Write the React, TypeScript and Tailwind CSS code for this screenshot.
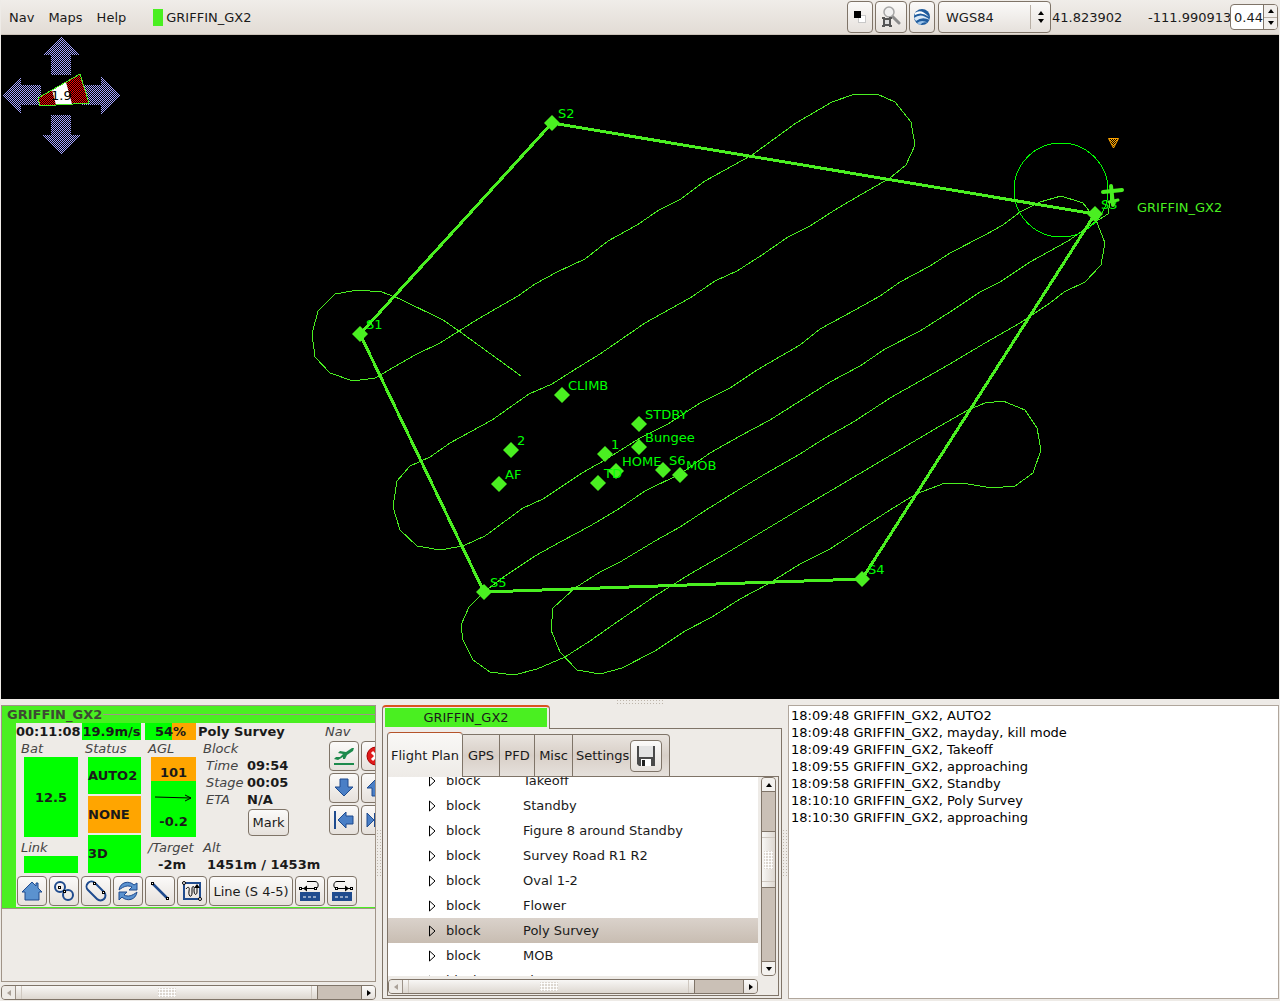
import type { ReactNode } from 'react';

const GREEN = '#4aef21';

interface Waypoint {
  name: string;
  x: number;
  y: number;
}

const waypoints: Waypoint[] = [
  { name: 'S1', x: 360, y: 334 },
  { name: 'S2', x: 552, y: 123 },
  { name: 'S3', x: 1095, y: 214 },
  { name: 'S4', x: 862, y: 579 },
  { name: 'S5', x: 484, y: 592 },
  { name: 'CLIMB', x: 562, y: 395 },
  { name: 'STDBY', x: 639, y: 424 },
  { name: 'Bungee', x: 639, y: 447 },
  { name: '1', x: 605, y: 454 },
  { name: '2', x: 511, y: 450 },
  { name: 'AF', x: 499, y: 484 },
  { name: 'HOME', x: 616, y: 471 },
  { name: 'TD', x: 598, y: 483 },
  { name: 'S6', x: 663, y: 470 },
  { name: 'MOB', x: 680, y: 475 },
];

const track = [
  '521,376 459,331 443,320 400,299 382,292 358,290 335,294 318,311 312,334 315,357 330,373 353,381 375,378',
  '415,355 440,343 478,319 518,296 535,284 557,272 585,259 608,241 637,225 659,210 681,199 705,181 752,155 796,123 832,102',
  '855,94 877,94 895,102 911,122 915,145 906,165 890,178',
  '862,194 838,208 810,226 788,237 762,255 737,271 715,281 690,298 645,323 600,354 574,370 552,384 529,394 492,420 450,443 430,457',
  '410,466 397,481 393,507 400,530 417,546 440,550 463,546',
  '485,536 523,508 543,499 582,473 605,460 640,438 668,424 700,403 730,388 757,370 800,345 820,329 855,310 880,296 900,282 930,266 950,253 985,235 1003,225 1020,212 1040,202',
  '1061,196 1083,203 1096,220 1105,243 1101,265 1085,282 1064,292',
  '1050,303 1020,323 985,343 955,361 920,381 890,398 855,421 825,438 800,454 765,474 740,489 706,510 680,527 655,541 620,562 600,572 575,588',
  '553,608 551,630 560,652 577,670 600,674 622,668',
  '655,651 685,631 712,617 740,599 768,584 800,564 830,549 862,528 890,510 916,494',
  '945,483 968,484 992,488 1015,486 1033,473 1041,450 1037,428 1025,410 1003,401 985,403 968,410',
  '940,426 800,509 725,554 690,574 655,596 617,622 590,641 565,657',
  '537,669 514,675 490,672 473,660 463,640 461,625 469,607 484,592',
  '505,576 535,556 562,541 590,526 617,510 645,491 680,474 710,453 740,436 770,420 800,401 830,382 860,366 885,349 920,331 950,312 980,292 1000,282 1030,262 1068,241 1095,222 1108,214 1111,195',
].join(' ');

const blocks = [
  'Takeoff',
  'Standby',
  'Figure 8 around Standby',
  'Survey Road R1 R2',
  'Oval 1-2',
  'Flower',
  'Poly Survey',
  'MOB',
  'Line 1-2',
];

const messages = [
  '18:09:48 GRIFFIN_GX2, AUTO2',
  '18:09:48 GRIFFIN_GX2, mayday, kill mode',
  '18:09:49 GRIFFIN_GX2, Takeoff',
  '18:09:55 GRIFFIN_GX2, approaching',
  '18:09:58 GRIFFIN_GX2, Standby',
  '18:10:10 GRIFFIN_GX2, Poly Survey',
  '18:10:30 GRIFFIN_GX2, approaching',
];

function ToolButton({ label, className = 'w-[30px] h-[30px]', children }: { label: string; className?: string; children: ReactNode }) {
  return (
    <button
      type="button"
      aria-label={label}
      className={`shrink-0 flex items-center justify-center rounded border border-[#7f7468] bg-linear-to-b from-[#fbfaf9] to-[#e6e1dc] ${className}`}
    >
      {children}
    </button>
  );
}

function MapView() {
  return (
    <svg viewBox="1 35 1278 664" className="block w-full h-auto bg-black" fontFamily="DejaVu Sans, sans-serif" fontSize="13">
      <defs>
        <pattern id="dotsBlue" width="2" height="2" patternUnits="userSpaceOnUse">
          <rect width="1" height="1" fill="#a3a3ff" />
          <rect x="1" y="1" width="1" height="1" fill="#a3a3ff" />
        </pattern>
        <pattern id="dotsRed" width="2" height="2" patternUnits="userSpaceOnUse">
          <rect width="1" height="1" fill="#ff0000" />
          <rect x="1" y="1" width="1" height="1" fill="#ff0000" />
        </pattern>
        <pattern id="dotsOrange" width="2" height="2" patternUnits="userSpaceOnUse">
          <rect width="1" height="1" fill="#ffa500" />
          <rect x="1" y="1" width="1" height="1" fill="#ffa500" />
        </pattern>
      </defs>

      {/* Pan arrows */}
      <g fill="url(#dotsBlue)" shapeRendering="crispEdges">
        <path d="M61 36 L80 55 H71 V75 H51 V55 H43 Z" />
        <path d="M61 155 L81 135 H71 V115 H51 V135 H42 Z" />
        <path d="M2 95 L21 77 V85 H41 V105 H21 V114 Z" />
        <path d="M121 95 L101 76 V85 H81 V105 H101 V115 Z" />
      </g>

      {/* Wind indicator */}
      <path d="M38 98 L80 74 L89 103 L40 106 Z" fill="#000" />
      <g shapeRendering="crispEdges">
        <path d="M38 98 L52 90 L56 105 L40 106 Z" fill="url(#dotsRed)" />
        <path d="M66 82 L80 74 L89 103 L72 104 Z" fill="url(#dotsRed)" />
      </g>
      <path d="M52 90 L66 82 L72 104 L56 105 Z" fill="#fff" />
      <path d="M38 98 L80 74 L89 103 L40 106 Z" fill="none" stroke={GREEN} shapeRendering="crispEdges" />
      <text x="51" y="100" fill="#000">1.9</text>

      {/* Track and orbit */}
      <g fill="none" stroke={GREEN} shapeRendering="crispEdges">
        <polyline points={track} />
        <circle cx="1061" cy="190" r="47" stroke="#00ff00" />
      </g>

      <polygon
        points="552,123 1095,214 862,579 484,592 360,334"
        fill="none"
        stroke={GREEN}
        strokeWidth="3"
        shapeRendering="crispEdges"
      />

      {waypoints.map((wp) => (
        <g key={wp.name}>
          <path d={`M${wp.x} ${wp.y - 8} l8 8 l-8 8 l-8 -8 z`} fill={GREEN} />
          <text x={wp.x + 6} y={wp.y - 5} fill="#00ff00">{wp.name}</text>
        </g>
      ))}

      {/* Aircraft */}
      <g stroke={GREEN} strokeLinecap="round">
        <path d="M1103 192 L1122 190" strokeWidth="4" />
        <path d="M1111 186 L1113 205" strokeWidth="4" />
        <path d="M1109 202 L1118 200" strokeWidth="3" />
      </g>
      <text x="1137" y="212" fill={GREEN}>GRIFFIN_GX2</text>
      <path d="M1109 139 H1118 L1113.500 148 Z" fill="url(#dotsOrange)" />
      <path d="M1108.500 138.500 H1118.500 L1113.500 148 Z" fill="none" stroke="#ffa500" />
    </svg>
  );
}

function MenuBar() {
  return (
    <header className="h-[35px] shrink-0 flex items-center pl-2 pr-px bg-linear-to-b from-[#f0ede9] to-[#e2dcd5] border-b border-[#cbc2b8]">
      <nav className="flex items-center gap-[14px]">
        <button type="button">Nav</button>
        <button type="button">Maps</button>
        <button type="button">Help</button>
      </nav>
      <div className="flex items-center ml-[27px] gap-[3px]">
        <span className="w-[10px] h-[17px] bg-[#4aef21]" />
        <span>GRIFFIN_GX2</span>
      </div>
      <div className="flex items-center ml-auto">
        <ToolButton label="Background color" className="w-[26px] h-8">
          <svg width="14" height="14" viewBox="0 0 14 14">
            <rect x="5.500" y="5.500" width="7" height="7" fill="#fff" stroke="#c8c8c8" />
            <rect x="1" y="1" width="7" height="7" fill="#000" />
          </svg>
        </ToolButton>
        <ToolButton label="Zoom to region" className="w-8 h-8 ml-[2px]">
          <svg width="20" height="22" viewBox="0 0 20 22">
            <path d="M11 10 L18 17" stroke="#8c8c8c" strokeWidth="3" strokeLinecap="round" />
            <circle cx="8" cy="6" r="5" fill="#f1f1f1" stroke="#a6a6a6" strokeWidth="1.500" />
            <rect x="3" y="13" width="6" height="6" fill="#ddd" stroke="#555" strokeWidth="2" />
            <path d="M1 12 h3 M8 12 h3 M1 20 h3 M8 20 h3" stroke="#555" strokeWidth="2" />
          </svg>
        </ToolButton>
        <ToolButton label="Google Earth" className="w-[26px] h-8 ml-[2px]">
          <svg width="18" height="18" viewBox="0 0 18 18">
            <circle cx="9" cy="9" r="8" fill="#1f5c9e" />
            <path d="M2 5 Q8 0 16 9 Q9 3 2 7 Z" fill="#fff" />
            <path d="M1 10 Q8 4 17 12 Q9 8 3 13 Z" fill="#dbe9f6" />
            <path d="M4 15 Q9 11 15 15 Q10 13 7 17 Z" fill="#9cc4ea" />
          </svg>
        </ToolButton>
        <div className="relative ml-[3px]">
          <select
            aria-label="Datum"
            className="appearance-none w-[113px] h-8 pl-[7px] rounded border border-[#7f7468] bg-linear-to-b from-[#fbfaf9] to-[#e6e1dc]"
          >
            <option>WGS84</option>
          </select>
          <svg width="32" height="24" viewBox="0 0 32 24" className="absolute right-0 top-1 pointer-events-none">
            <path d="M11.500 0 V24" stroke="#b8afa5" />
            <path d="M19 10 h6 l-3 -4 z M19 14 h6 l-3 4 z" fill="#000" />
          </svg>
        </div>
        <span className="ml-px w-24">41.823902</span>
        <span className="w-[82px]">-111.990913</span>
        <div className="flex w-12 h-[26px] rounded border border-[#7f7468] bg-white overflow-hidden">
          <input aria-label="Zoom" defaultValue="0.44" className="w-8 pl-[3px] outline-none" />
          <div className="flex flex-col flex-1 border-l border-[#7f7468] bg-[#f2efec]">
            <button type="button" aria-label="Increase" className="flex-1 flex items-center justify-center border-b border-[#b8afa5]">
              <svg width="6" height="4" viewBox="0 0 6 4"><path d="M0 4 h6 l-3 -4 z" /></svg>
            </button>
            <button type="button" aria-label="Decrease" className="flex-1 flex items-center justify-center">
              <svg width="6" height="4" viewBox="0 0 6 4"><path d="M0 0 h6 l-3 4 z" /></svg>
            </button>
          </div>
        </div>
      </div>
    </header>
  );
}

function ArrowIcon({ direction }: { direction: 'down' | 'up' | 'left' }) {
  const shapes = {
    down: 'M6 1 H14 V9 H19 L10 18 L1 9 H6 Z',
    up: 'M6 18 H14 V10 H19 L10 1 L1 10 H6 Z',
    left: 'M4 10 L12 2 V6 H19 V14 H12 V18 Z',
  };
  return (
    <svg width="20" height="20" viewBox="0 0 20 20" fill="#4a7fc6" stroke="#1f4b8e">
      {direction === 'left' && <path d="M1 1 V19" strokeWidth="2" />}
      <path d={shapes[direction]} />
    </svg>
  );
}

function NavButtons() {
  return (
    <div className="grid grid-cols-[30px_30px] gap-[2px] ml-auto shrink-0">
      <ToolButton label="Takeoff">
        <svg width="22" height="20" viewBox="0 0 22 20" fill="#1d8a4c">
          <path d="M1 13 L3 11 L7 11 L10 8 L5 7 L7 5 L13 6 L19 2 L21 2 L20 5 L14 9 L12 13 L10 13 L10 11 L5 14 Z" />
          <rect x="1" y="17" width="20" height="2" />
        </svg>
      </ToolButton>
      <ToolButton label="Kill">
        <svg width="20" height="20" viewBox="0 0 20 20">
          <circle cx="10" cy="10" r="9" fill="#e01b1b" stroke="#a80000" />
          <path d="M6 6 L14 14 M14 6 L6 14" stroke="#fff" strokeWidth="3" />
        </svg>
      </ToolButton>
      <ToolButton label="Descend"><ArrowIcon direction="down" /></ToolButton>
      <ToolButton label="Climb"><ArrowIcon direction="up" /></ToolButton>
      <ToolButton label="Shift left"><ArrowIcon direction="left" /></ToolButton>
      <ToolButton label="Shift right">
        <svg width="20" height="20" viewBox="0 0 20 20" fill="#4a7fc6" stroke="#1f4b8e">
          <path d="M1 3 L8 10 L1 17 Z" />
          <path d="M9 3 V17" strokeWidth="2" />
        </svg>
      </ToolButton>
    </div>
  );
}

function BlockButtons() {
  return (
    <div className="flex gap-[2px] mt-[3px] ml-px">
      <ToolButton label="Home">
        <svg width="22" height="22" viewBox="0 0 22 22">
          <path d="M1 12 L11 2 L15 6 V3 H17 V8 L21 12 H18 V20 H4 V12 Z" fill="#5b92cf" stroke="#1f4b8e" />
        </svg>
      </ToolButton>
      <ToolButton label="Figure 8">
        <svg width="22" height="22" viewBox="0 0 22 22" fill="none">
          <circle cx="7" cy="7" r="5" stroke="#1f4b8e" strokeWidth="2" />
          <circle cx="15" cy="15" r="5" stroke="#1f4b8e" strokeWidth="2" />
          <rect x="5.500" y="6.500" width="2" height="2" fill="#fff" stroke="#000" />
          <rect x="10.500" y="10.500" width="2" height="2" fill="#fff" stroke="#000" />
        </svg>
      </ToolButton>
      <ToolButton label="Oval">
        <svg width="22" height="22" viewBox="0 0 22 22" fill="none">
          <path d="M3 10 L12 19 A4.500 4.500 0 0 0 19 12 L10 3 A4.500 4.500 0 0 0 3 10 Z" stroke="#1f4b8e" strokeWidth="2" />
          <rect x="8.500" y="2.500" width="2" height="2" fill="#fff" stroke="#000" />
          <rect x="17.500" y="11.500" width="2" height="2" fill="#fff" stroke="#000" />
        </svg>
      </ToolButton>
      <ToolButton label="Restart">
        <svg width="22" height="22" viewBox="0 0 22 22" fill="#5b92cf" stroke="#1f4b8e">
          <path d="M2 10 C3 2 12 0 17 5 L20 3 V10 H12 L15 7 C11 5 7 6 2 10 Z" />
          <path d="M20 12 C19 20 10 22 5 17 L2 20 V12 H10 L7 15 C11 17 15 16 20 12 Z" />
        </svg>
      </ToolButton>
      <ToolButton label="Line">
        <svg width="22" height="22" viewBox="0 0 22 22">
          <path d="M4 4 L18 18" stroke="#1f4b8e" strokeWidth="2.500" />
          <rect x="2.500" y="2.500" width="2" height="2" fill="#fff" stroke="#000" />
          <rect x="17.500" y="17.500" width="2" height="2" fill="#fff" stroke="#000" />
        </svg>
      </ToolButton>
      <ToolButton label="Survey">
        <svg width="22" height="22" viewBox="0 0 22 22" fill="none">
          <rect x="3" y="3" width="16" height="16" stroke="#1f4b8e" strokeWidth="2" />
          <path d="M5 9 C7 6 9 7 8 11 C7 17 11 18 11 13 V9 C11 5 14 6 13 10 C13 16 16 15 16 12 V6" stroke="#000" />
          <path d="M13 8 L16 4 L19 8 Z" fill="#000" />
          <circle cx="3" cy="3" r="1.500" fill="#fff" stroke="#000" />
          <circle cx="19" cy="19" r="1.500" fill="#fff" stroke="#000" />
        </svg>
      </ToolButton>
      <ToolButton label="Line (S 4-5)" className="w-[84px] h-[30px]">Line (S 4-5)</ToolButton>
      <ToolButton label="Land left">
        <svg width="22" height="22" viewBox="0 0 22 22">
          <rect x="1" y="12" width="20" height="9" fill="#1f4b8e" />
          <path d="M4 17 H19" stroke="#fff" strokeDasharray="3 2" />
          <path d="M2 8.500 H17 C20 8 20 1.500 16 1.500 H8" fill="none" stroke="#000" />
          <path d="M4 8.500 l4 -3 v6 z" />
          <rect x="0.500" y="7.500" width="2" height="2" fill="#fff" stroke="#000" />
          <rect x="15.500" y="7.500" width="2" height="2" fill="#fff" stroke="#000" />
        </svg>
      </ToolButton>
      <ToolButton label="Land right">
        <svg width="22" height="22" viewBox="0 0 22 22">
          <rect x="1" y="12" width="20" height="9" fill="#1f4b8e" />
          <path d="M4 17 H19" stroke="#fff" strokeDasharray="3 2" />
          <path d="M20 8.500 H5 C2 8 2 1.500 6 1.500 H14" fill="none" stroke="#000" />
          <path d="M18 8.500 l-4 -3 v6 z" />
          <rect x="19.500" y="7.500" width="2" height="2" fill="#fff" stroke="#000" />
          <rect x="4.500" y="7.500" width="2" height="2" fill="#fff" stroke="#000" />
        </svg>
      </ToolButton>
    </div>
  );
}

function Caption({ children, className = '' }: { children: ReactNode; className?: string }) {
  return <div className={`italic font-normal text-[#444] h-4 leading-4 ${className}`}>{children}</div>;
}

function StripPanel() {
  return (
    <section className="bg-[#4aef21] border-b border-[#a09488]">
      <div className="flex items-center h-[17px] pl-[5px] gap-px">
        <h2 className="font-bold text-[#3d4a33]">GRIFFIN_GX2</h2>
        <span className="flex-1 h-px bg-[#a09488]" />
      </div>
      <div className="ml-[14px] mb-px bg-[#eeebe7] overflow-hidden pb-px">
        <div className="w-[376px]">
          <div className="flex h-[17px] leading-[17px] font-bold">
            <span className="w-[66px]">00:11:08</span>
            <span className="w-[59px] bg-[#00ff00] text-center">19.9m/s</span>
            <span className="w-[51px] ml-1 text-center bg-linear-to-r from-[#00ff00] from-53% to-[#ffa500] to-53%">54%</span>
            <span className="ml-[2px] w-[127px]">Poly Survey</span>
            <span className="italic font-normal text-[#444]">Nav</span>
          </div>
          <div className="flex h-[133px] pt-px font-bold">
            <div className="w-16 pl-[5px] pr-[2px]">
              <Caption>Bat</Caption>
              <div className="ml-[3px] h-20 bg-[#00ff00] flex items-center justify-center">12.5</div>
              <Caption className="mt-[3px]">Link</Caption>
              <div className="ml-[3px] h-[17px] bg-[#00ff00]" />
            </div>
            <div className="w-16 pl-[5px] pr-[3px]">
              <Caption>Status</Caption>
              <div className="ml-[3px] flex flex-col gap-[2px]">
                <div className="h-[37px] leading-[37px] bg-[#00ff00]">AUTO2</div>
                <div className="h-[37px] leading-[37px] bg-[#ffa500]">NONE</div>
                <div className="h-[38px] leading-[38px] bg-[#00ff00]">3D</div>
              </div>
            </div>
            <div className="w-[52px] pl-1">
              <Caption>AGL</Caption>
              <div className="ml-[3px] h-20 w-[45px] flex flex-col items-center justify-between pt-2 pb-[7px] leading-4 bg-linear-to-b from-[#ffa500] from-30% to-[#00ff00] to-30%">
                <span>101</span>
                <svg width="37" height="8" viewBox="0 0 37 8" fill="none" stroke="#000">
                  <path d="M0 3 L36 4 M30 1 L36 4 L30 7" />
                </svg>
                <span>-0.2</span>
              </div>
              <Caption className="mt-[3px]">/Target</Caption>
              <div className="text-center">-2m</div>
            </div>
            <div className="pl-[7px] w-[130px]">
              <Caption>Block</Caption>
              <dl className="grid grid-cols-[41px_1fr] pl-[3px] leading-[17px]">
                <dt className="font-normal italic text-[#444]">Time</dt>
                <dd>09:54</dd>
                <dt className="font-normal italic text-[#444]">Stage</dt>
                <dd>00:05</dd>
                <dt className="font-normal italic text-[#444]">ETA</dt>
                <dd>N/A</dd>
              </dl>
              <ToolButton label="Mark" className="w-[41px] h-[27px] ml-[45px] mt-px font-normal">Mark</ToolButton>
              <Caption className="mt-1">Alt</Caption>
              <div className="pl-1 whitespace-nowrap">1451m / 1453m</div>
            </div>
            <div className="flex items-start pl-[3px]">
              <NavButtons />
            </div>
          </div>
          <BlockButtons />
        </div>
      </div>
    </section>
  );
}

function Grip({ vertical = false }: { vertical?: boolean }) {
  return (
    <span
      className={`bg-[radial-gradient(#bdb5ab_35%,transparent_45%)] bg-size-[3px_3px] ${vertical ? 'w-[6px] h-12' : 'w-12 h-[6px]'}`}
    />
  );
}

function HScrollbar({ thumb, className = '' }: { thumb: string; className?: string }) {
  return (
    <div className={`flex h-[15px] shrink-0 rounded border border-[#7f7468] bg-[#cac0b6] overflow-hidden ${className}`}>
      <button type="button" aria-label="Scroll left" className="w-[14px] flex items-center justify-center bg-[#eeebe7] border-r border-[#9c9288]">
        <svg width="4" height="6" viewBox="0 0 4 6" fill="#a9a097"><path d="M4 0 v6 l-4 -3 z" /></svg>
      </button>
      <div className={`flex items-center justify-center bg-linear-to-b from-[#f8f7f5] to-[#ddd7d0] border-r border-[#7f7468] ${thumb}`}>
        <span className="flex-1 mx-[5px] h-full border-x border-[#cfc8c0] flex items-center justify-center">
          <span className="w-[18px] h-[9px] bg-[radial-gradient(#fff_45%,#dcd6cf_60%)] bg-size-[3px_3px]" />
        </span>
      </div>
      <button type="button" aria-label="Scroll right" className="w-[14px] ml-auto flex items-center justify-center bg-linear-to-b from-[#fbfaf9] to-[#e6e1dc] border-l border-[#7f7468]">
        <svg width="4" height="6" viewBox="0 0 4 6"><path d="M0 0 v6 l4 -3 z" /></svg>
      </button>
    </div>
  );
}

function VScrollbar() {
  return (
    <div className="flex flex-col w-[15px] shrink-0 rounded border border-[#7f7468] bg-[#cac0b6] overflow-hidden">
      <button type="button" aria-label="Scroll up" className="h-[14px] flex items-center justify-center bg-[#f4f2ef] border-b border-[#7f7468]">
        <svg width="6" height="4" viewBox="0 0 6 4"><path d="M0 4 h6 l-3 -4 z" /></svg>
      </button>
      <div className="mt-[39px] h-[57px] py-[5px] bg-linear-to-r from-[#f8f7f5] to-[#ddd7d0] border-y border-[#7f7468]">
        <div className="h-full border-y border-[#cfc8c0] flex items-center justify-center">
          <span className="w-[9px] h-[18px] bg-[radial-gradient(#fff_45%,#dcd6cf_60%)] bg-size-[3px_3px]" />
        </div>
      </div>
      <button type="button" aria-label="Scroll down" className="h-[14px] mt-auto flex items-center justify-center bg-[#f4f2ef] border-t border-[#7f7468]">
        <svg width="6" height="4" viewBox="0 0 6 4"><path d="M0 0 h6 l-3 4 z" /></svg>
      </button>
    </div>
  );
}

function FlightPlan() {
  return (
    <div className="flex-1 min-h-0 flex flex-col border border-[#7f7468] pr-[2px] pb-px -mt-px">
      <div className="flex flex-1 min-h-0 gap-[3px]">
        <div className="flex-1 h-[199px] bg-white overflow-hidden">
          <table className="w-full -mt-[9px]">
            <tbody>
              {blocks.map((name) => (
                <tr
                  key={name}
                  className={name === 'Poly Survey' ? 'h-[25px] bg-linear-to-b from-[#dad2cb] to-[#c8bdb2]' : 'h-[25px]'}
                >
                  <td className="w-[58px] pl-[41px]">
                    <svg width="7" height="12" viewBox="0 0 7 12" fill="none" stroke="#000">
                      <path d="M0.500 1 L6 6 L0.500 11 Z" />
                    </svg>
                  </td>
                  <td className="w-[77px]">block</td>
                  <td>{name}</td>
                </tr>
              ))}
            </tbody>
          </table>
        </div>
        <VScrollbar />
      </div>
      <HScrollbar thumb="w-[292px]" className="mt-[3px] mr-[18px]" />
    </div>
  );
}

function PlanNotebook() {
  const tab = 'h-[43px] flex items-center border border-l-0 border-[#7f7468] bg-linear-to-b from-[#e9e4df] via-[#d8cfc7] to-[#e6e1dc]';
  return (
    <section className="flex flex-col w-[400px] shrink-0 pb-[2px]">
      <button
        type="button"
        className="w-[168px] h-6 px-[2px] pt-px pb-[2px] rounded-t border border-b-0 border-[#7f7468] border-t-2 border-t-[#d9541e] bg-[#eeebe7] relative z-10"
      >
        <span className="block h-[19px] leading-[19px] bg-[#4aef21]">GRIFFIN_GX2</span>
      </button>
      <div className="flex-1 flex flex-col border border-[#7f7468] -mt-px pl-1 pr-[2px] pt-[3px] pb-[2px]">
        <div role="tablist" className="flex items-end relative z-10">
          <button role="tab" aria-selected="true" className="w-[76px] h-[45px] rounded-t border border-b-0 border-[#7f7468] border-t-[#b5532a] bg-linear-to-b from-[#f9f8f6] to-[#eeebe7]">
            Flight Plan
          </button>
          <button role="tab" className={`w-[37px] justify-center ${tab}`}>GPS</button>
          <button role="tab" className={`w-[35px] justify-center ${tab}`}>PFD</button>
          <button role="tab" className={`w-[38px] justify-center ${tab}`}>Misc</button>
          <div className={`w-[97px] pl-[3px] rounded-tr ${tab}`}>
            <button role="tab">Settings</button>
            <ToolButton label="Save" className="w-8 h-8 ml-px">
              <svg width="18" height="20" viewBox="0 0 18 20">
                <path d="M0 0 H18 V20 H2 L0 18 Z" fill="#4a4a4a" />
                <rect x="2" y="0" width="14" height="11" fill="#e4e4e4" />
                <rect x="4" y="13" width="10" height="7" fill="#fff" />
                <rect x="5" y="14" width="3" height="6" fill="#222" />
              </svg>
            </ToolButton>
          </div>
        </div>
        <FlightPlan />
      </div>
    </section>
  );
}

export default function App() {
  return (
    <div className="min-h-screen flex flex-col px-px bg-[#eeebe7] text-[#1a1a1a] text-[13px] leading-[17px] font-['DejaVu_Sans',sans-serif]">
      <MenuBar />
      <MapView />
      <div className="flex justify-center h-[6px]">
        <Grip />
      </div>
      <main className="flex flex-1">
        <div className="flex flex-col w-[375px] shrink-0 pb-px">
          <div className="flex-1 border border-[#a09488] overflow-hidden">
            <StripPanel />
          </div>
          <HScrollbar thumb="w-[302px]" className="mt-[3px]" />
        </div>
        <div className="w-[6px] flex items-center shrink-0"><Grip vertical /></div>
        <PlanNotebook />
        <div className="w-[6px] flex items-center shrink-0"><Grip vertical /></div>
        <div role="log" className="flex-1 mb-[2px] pl-[2px] pt-px bg-white border border-[#b0a69c] text-black">
          {messages.map((m) => (
            <p key={m}>{m}</p>
          ))}
        </div>
      </main>
    </div>
  );
}
